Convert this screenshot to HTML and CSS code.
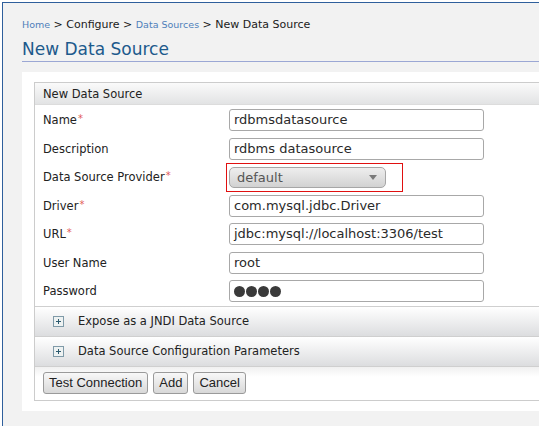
FILE: index.html
```html
<!DOCTYPE html>
<html>
<head>
<meta charset="utf-8">
<link rel="stylesheet" href="styles.css">
</head>
<body>
<div class="frame">
  <div class="content">
    <div class="crumbs"><a class="crumb-link">Home</a> &gt; Configure &gt; <a class="crumb-link">Data Sources</a> &gt; New Data Source</div>
    <h1 class="title">New Data Source</h1>
    <div class="panel">
      <div class="box">
        <div class="box-head">New Data Source</div>
        <div class="rows">
          <div class="row"><span class="label">Name<span class="req">*</span></span><div class="input">rdbmsdatasource</div></div>
          <div class="row"><span class="label">Description</span><div class="input">rdbms datasource</div></div>
          <div class="row"><span class="label">Data Source Provider<span class="req">*</span></span>
            <div class="select-cell">
              <div class="select"><span>default</span><span class="arrow"></span></div>
              <div class="highlight"></div>
            </div>
          </div>
          <div class="row"><span class="label">Driver<span class="req">*</span></span><div class="input">com.mysql.jdbc.Driver</div></div>
          <div class="row"><span class="label">URL<span class="req">*</span></span><div class="input">jdbc:mysql://localhost:3306/test</div></div>
          <div class="row"><span class="label">User Name</span><div class="input">root</div></div>
          <div class="row"><span class="label">Password</span><div class="input dots"><i></i><i></i><i></i><i></i></div></div>
        </div>
        <div class="expand"><span class="plus"><svg width="11" height="11" viewBox="0 0 11 11"><rect x="0.5" y="0.5" width="10" height="10" fill="#eef2f2" stroke="#7f9aa8"/><path d="M3 5.5h5M5.5 3v5" stroke="#2d5a6e" stroke-width="1"/></svg></span>Expose as a JNDI Data Source</div>
        <div class="expand"><span class="plus"><svg width="11" height="11" viewBox="0 0 11 11"><rect x="0.5" y="0.5" width="10" height="10" fill="#eef2f2" stroke="#7f9aa8"/><path d="M3 5.5h5M5.5 3v5" stroke="#2d5a6e" stroke-width="1"/></svg></span>Data Source Configuration Parameters</div>
        <div class="buttons">
          <button class="btn">Test Connection</button>
          <button class="btn">Add</button>
          <button class="btn">Cancel</button>
        </div>
      </div>
    </div>
  </div>
</div>
</body>
</html>
```
FILE: styles.css
```css
html, body {
  margin: 0;
  padding: 0;
  background: #ffffff;
  height: 100%;
  overflow: hidden;
}
.frame {
  margin: 2px 0 0 2px;
  border-top: 1px solid #2f5f9c;
  border-left: 1px solid #2f5f9c;
  background: #f2f2f2;
  height: 430px;
  overflow: hidden;
  font-family: "DejaVu Sans", sans-serif;
  color: #222;
}
.content {
  padding: 14px 0 0 19px;
  width: 700px;
}
.crumbs {
  font-size: 11px;
  line-height: 16px;
  height: 16px;
  color: #1a1a1a;
}
.crumb-link {
  font-size: 9.5px;
  color: #4f7fba;
}
.title {
  margin: 5px 0 0 0;
  font-size: 17px;
  line-height: 23px;
  font-weight: normal;
  color: #1d5a8c;
  border-bottom: 1px solid #9ba7d4;
  padding-bottom: 0;
  width: 600px;
}
.panel {
  margin-top: 10px;
  background: #ffffff;
  padding: 10px 0 10px 12px;
  width: 600px;
}
.box {
  border: 1px solid #cccccc;
  width: 560px;
}
.box-head {
  height: 22px;
  line-height: 22px;
  padding-left: 8px;
  font-size: 11.5px;
  background: linear-gradient(#fafafa, #e2e3e4);
  border-bottom: 1px solid #dcdcdc;
  box-sizing: border-box;
}
.rows {
  padding-left: 8px;
  padding-top: 1px;
}
.row {
  height: 28.5px;
  display: flex;
  align-items: center;
}
.label {
  width: 186px;
  font-size: 11.5px;
  flex: none;
}
.req {
  color: #e25a5a;
  font-size: 10px;
  vertical-align: 2px;
  margin-left: 1px;
}
.input {
  width: 255px;
  height: 22px;
  box-sizing: border-box;
  border: 1px solid #a8a8a8;
  border-radius: 3px;
  padding-left: 4px;
  font-size: 13px;
  line-height: 20px;
  color: #2a2a2a;
  background: #fff;
}
.dots {
  display: flex;
  align-items: center;
  gap: 1px;
}
.dots i {
  width: 11px;
  height: 11px;
  border-radius: 50%;
  background: #3a3a3a;
}
.select-cell {
  position: relative;
}
.select {
  width: 157px;
  height: 21px;
  box-sizing: border-box;
  border: 1px solid #a6a6a6;
  border-radius: 5px;
  background: linear-gradient(#eeeeee, #d2d2d2);
  display: flex;
  align-items: center;
  justify-content: space-between;
  padding: 0 8px 0 7px;
  font-size: 13px;
  color: #555;
}
.arrow {
  width: 0;
  height: 0;
  border-left: 4px solid transparent;
  border-right: 4px solid transparent;
  border-top: 5px solid #7a7a7a;
}
.highlight {
  position: absolute;
  left: -3px;
  top: -4px;
  width: 177px;
  height: 29px;
  border: 1px solid #e01010;
  box-sizing: border-box;
}
.expand {
  height: 30px;
  box-sizing: border-box;
  border-top: 1px solid #cfcfcf;
  background: linear-gradient(#ffffff, #dcdddf);
  display: flex;
  align-items: center;
  padding-left: 18px;
  font-size: 11.5px;
}
.plus {
  width: 11px;
  height: 11px;
  margin-right: 14px;
  display: flex;
}
.buttons {
  border-top: 1px solid #cfcfcf;
  height: 34px;
  box-sizing: border-box;
  padding: 5px 0 0 8px;
  display: flex;
  gap: 5px;
  background: linear-gradient(#f0f0f0, #ffffff 10px);
}
.btn {
  height: 22px;
  box-sizing: border-box;
  border: 1px solid #9a9a9a;
  border-radius: 3px;
  background: linear-gradient(#f8f8f8, #d8d8d8);
  font-family: "Liberation Sans", Arial, sans-serif;
  font-size: 13px;
  color: #222;
  padding: 0 5px;
  margin: 0;
}
```
